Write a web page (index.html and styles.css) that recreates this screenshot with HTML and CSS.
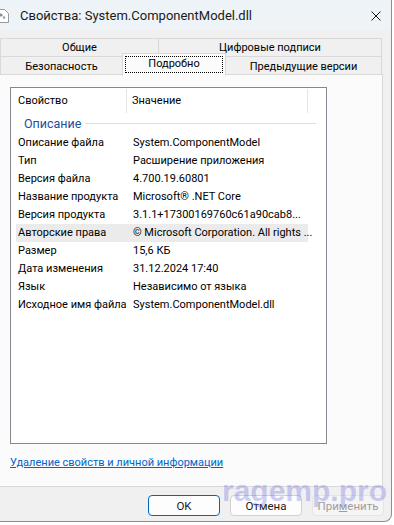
FILE: index.html
```html
<!DOCTYPE html>
<html lang="ru">
<head>
    <meta charset="UTF-8">
    <title>Свойства: System.ComponentModel.dll</title>
    <link rel="stylesheet" href="styles.css">
</head>
<body>
<div class="window">
    <div class="titlebar">
        <svg class="app-icon" width="12" height="14" viewBox="0 0 12 14">
            <path d="M0.5 0.5h7l4 4v9h-11z" fill="#fff" stroke="#9a9a9a"/>
            <circle cx="4" cy="6" r="1.6" fill="#8a8a8a"/>
            <circle cx="7" cy="8.5" r="1.3" fill="#a0a0a0"/>
        </svg>
        <span class="title">Свойства: System.ComponentModel.dll</span>
        <svg class="close" width="10" height="10" viewBox="0 0 10 10">
            <path d="M0.5 0.5L9.5 9.5M9.5 0.5L0.5 9.5" stroke="#1a1a1a" stroke-width="1"/>
        </svg>
    </div>

    <div class="content">
        <div class="tabs">
            <div class="tabrow row-back">
                <div class="tab">Общие</div>
                <div class="tab">Цифровые подписи</div>
            </div>
            <div class="tabrow row-front">
                <div class="tab">Безопасность</div>
                <div class="tab tab-active"><span class="focus">Подробно</span></div>
                <div class="tab">Предыдущие версии</div>
            </div>
        </div>

        <div class="panel">
            <div class="list">
                <div class="list-head">
                    <div class="head-col col-name">Свойство</div>
                    <div class="head-col col-value">Значение</div>
                </div>
                <div class="group"><span>Описание</span><span class="group-line"></span></div>
                <div class="row"><span class="name">Описание файла</span><span class="value">System.ComponentModel</span></div>
                <div class="row"><span class="name">Тип</span><span class="value">Расширение приложения</span></div>
                <div class="row"><span class="name">Версия файла</span><span class="value">4.700.19.60801</span></div>
                <div class="row"><span class="name">Название продукта</span><span class="value">Microsoft® .NET Core</span></div>
                <div class="row"><span class="name">Версия продукта</span><span class="value">3.1.1+17300169760c61a90cab8...</span></div>
                <div class="row row-hover"><span class="name">Авторские права</span><span class="value">© Microsoft Corporation. All rights ...</span></div>
                <div class="row"><span class="name">Размер</span><span class="value">15,6 КБ</span></div>
                <div class="row"><span class="name">Дата изменения</span><span class="value">31.12.2024 17:40</span></div>
                <div class="row"><span class="name">Язык</span><span class="value">Независимо от языка</span></div>
                <div class="row"><span class="name">Исходное имя файла</span><span class="value">System.ComponentModel.dll</span></div>
            </div>
            <a class="remove-link" href="#">Удаление свойств и личной информации</a>
        </div>

        <div class="buttons">
            <button class="btn btn-default">OK</button>
            <button class="btn">Отмена</button>
            <button class="btn btn-disabled">При<u>м</u>енить</button>
        </div>
    </div>

    <div class="watermark">ragemp.pro</div>
</div>
</body>
</html>
```

FILE: styles.css
```css
body {
  margin: 0;
  background: #ffffff;
  font-family: Roboto, "Noto Sans", sans-serif;
  font-size: 11px;
  color: #000000;
}

.window {
  position: relative;
  width: 391px;
  height: 521px;
  background: #f0f0f0;
  border-right: 1px solid #8e8e8e;
  border-bottom: 1px solid #8e8e8e;
  border-bottom-right-radius: 8px;
  overflow: hidden;
  display: flex;
  flex-direction: column;
}

.titlebar {
  height: 30px;
  background: #eef3f8;
  display: flex;
  align-items: center;
  flex-shrink: 0;
}

.app-icon {
  margin-left: -3px;
  margin-top: 1px;
}

.title {
  margin-left: 11px;
  font-size: 13px;
  color: #1a1a1a;
  flex: 1;
}

.close {
  margin-right: 10px;
  margin-top: 1px;
}

.content {
  flex: 1;
  display: flex;
  flex-direction: column;
  padding-top: 8px;
}

.tabs {
  width: 382px;
}

.tabrow {
  display: grid;
  height: 18px;
}

.row-back {
  grid-template-columns: 158px 224px;
}

.row-front {
  grid-template-columns: 122px 104px 156px;
}

.tab {
  border: 1px solid #d9d9d9;
  border-right: none;
  border-bottom: none;
  background: #f0f0f0;
  display: flex;
  align-items: center;
  justify-content: center;
  line-height: 16px;
}

.tab:last-child {
  border-right: 1px solid #d9d9d9;
}

.tab-active {
  background: #fbfbfb;
  margin-top: -3px;
  height: 22px;
  border-right: 1px solid #d9d9d9;
  position: relative;
  z-index: 1;
}

.tab-active + .tab {
  border-left: none;
}

.focus {
  display: block;
  width: 98px;
  height: 17px;
  margin-top: -2px;
  border: 1px dotted #000000;
  box-sizing: border-box;
  text-align: center;
  line-height: 14px;
}

.panel {
  width: 383px;
  height: 413px;
  box-sizing: border-box;
  background: #fbfbfb;
  border: 1px solid #d9d9d9;
  border-left: none;
  padding: 12px 0 0 10px;
}

.list {
  width: 317px;
  height: 357px;
  box-sizing: border-box;
  border: 1px solid #828790;
  background: #ffffff;
}

.list-head {
  display: flex;
  height: 26px;
  align-items: center;
}

.head-col {
  height: 24px;
  line-height: 24px;
  box-sizing: border-box;
  border-right: 1px solid #e5e5e5;
}

.head-col.col-name {
  width: 116px;
  padding-left: 7px;
}

.head-col.col-value {
  width: 181px;
  padding-left: 5px;
}

.group {
  display: flex;
  align-items: center;
  height: 18px;
  padding-left: 13px;
  margin-bottom: 2px;
  color: #1e4f9c;
  font-size: 12.5px;
}

.group-line {
  flex: 1;
  height: 1px;
  background: #d6e0ea;
  margin: 0 10px 0 4px;
}

.row {
  display: flex;
  height: 18px;
  line-height: 18px;
  width: 292px;
  margin-left: 5px;
  white-space: nowrap;
}

.row-hover {
  background: #ebebeb;
}

.row .name {
  width: 115px;
  padding-left: 2px;
  flex-shrink: 0;
}

.remove-link {
  display: inline-block;
  margin-top: 12px;
  color: #0066cc;
  text-decoration: underline;
}

.buttons {
  display: flex;
  justify-content: flex-end;
  gap: 10px;
  padding: 8px 7px 0 0;
}

.btn {
  width: 72px;
  height: 21px;
  padding: 0;
  font-family: inherit;
  font-size: 11.5px;
  color: #1a1a1a;
  background: #fdfdfd;
  border: 1px solid #d0d0d0;
  border-radius: 4px;
}

.btn-default {
  border-color: #0067c0;
}

.btn-disabled {
  color: #9d9d9d;
  background: #f5f5f5;
  border-color: #e5e5e5;
}

.watermark {
  position: absolute;
  left: 222px;
  top: 474px;
  font-family: "Liberation Sans", sans-serif;
  font-weight: bold;
  font-size: 30px;
  color: rgba(105, 105, 225, 0.33);
  pointer-events: none;
}
```
